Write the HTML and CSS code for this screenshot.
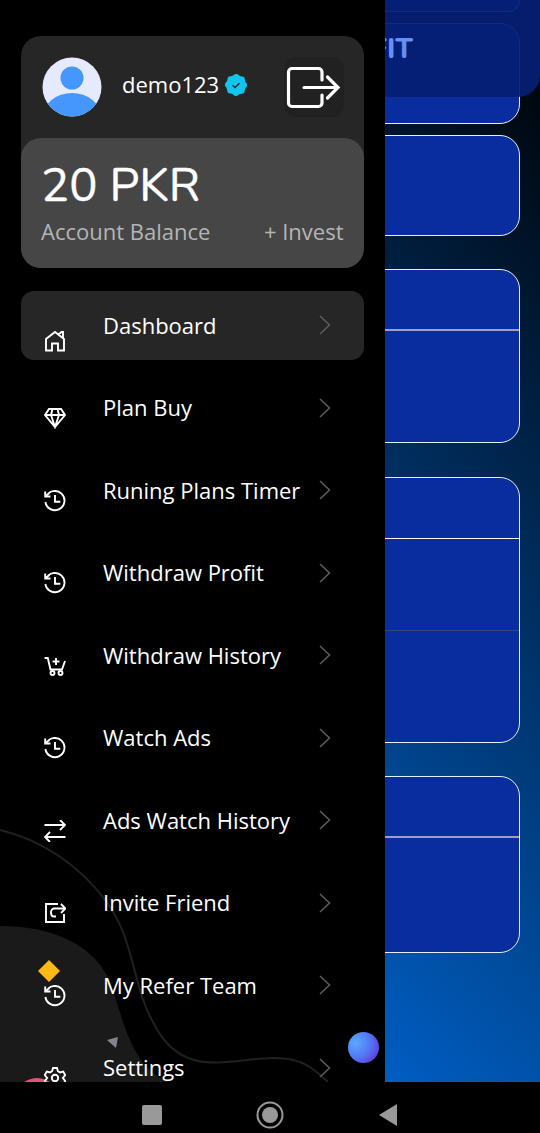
FILE: index.html
```html
<!DOCTYPE html>
<html lang="en">
<head>
  <meta charset="UTF-8">
  <title>Dashboard</title>
  <link rel="stylesheet" href="styles.css">
</head>
<body>
  <svg class="sprite">
    <symbol id="history" viewBox="0 0 22 22">
      <path d="M2.2 6.5A9.6 9.6 0 1 1 1.4 12M1.2 1.500v5h5.3M1.500 6l4-3M11 5v6.8h5.3"/>
    </symbol>
    <symbol id="chevron" viewBox="0 0 12 20">
      <path d="M1 1l9.500 9L1 19"/>
    </symbol>
  </svg>

  <div class="app">
    <main class="page">
      <header class="topbar">FIT</header>
      <div class="cards">
        <section class="card first"></section>
        <section class="card small"></section>
        <section class="card small"></section>
        <section class="card stats"><div class="card-head"></div></section>
        <section class="card tall"><div class="card-head"></div><div class="card-row"></div></section>
        <section class="card last"><div class="card-head"></div></section>
      </div>
    </main>

    <aside class="drawer">
      <svg class="waves" viewBox="0 0 385 262">
        <path fill="#1a1a1a" d="M0 106C52 106 92 124 109 159C122 192 130 250 170 262H0Z"/>
        <path fill="none" stroke="#202020" stroke-width="2" d="M0 10C42 20 79 45 106 81C135 120 132 165 153 202C181 260 228 239 272 238C302 237 314 249 328 262"/>
        <path fill="#fdb913" d="M49 140l11 11-11 11-11-11z"/>
        <path fill="#84848e" d="M107 220l11-3-2 11z"/>
        <circle cx="37" cy="280" r="22" fill="#e05577"/>
      </svg>

      <div class="profile">
        <div class="user">
          <svg class="avatar" viewBox="0 0 60 60">
            <clipPath id="round"><circle cx="30" cy="30" r="29.5"/></clipPath>
            <circle cx="30" cy="30" r="29.5" fill="#e6eaff"/>
            <g fill="#4596fd" clip-path="url(#round)">
              <circle cx="30" cy="21" r="11.5"/>
              <ellipse cx="30" cy="60" rx="29" ry="24"/>
            </g>
          </svg>
          <span class="name">demo123</span>
          <svg class="verified" viewBox="0 0 24 24">
            <circle cx="12" cy="12" r="10" fill="#12c5ee"/>
            <circle cx="12" cy="12" r="8" fill="none" stroke="#12c5ee" stroke-width="6" stroke-linecap="round" stroke-dasharray="0 6.283"/>
            <path fill="none" stroke="#262626" stroke-width="1.500" d="M8.500 12.300l2.500 2.200 4.500-4.300"/>
          </svg>
          <button class="logout">
            <svg viewBox="0 0 60 60">
              <path d="M38 23v-8a3.500 3.500 0 0 0-3.500-3.500H8A3.500 3.500 0 0 0 4.500 15v31A3.500 3.500 0 0 0 8 49.500h26.500A3.500 3.500 0 0 0 38 46v-8M20 30.500H54M43.500 20L54 30.500 43.500 41"/>
            </svg>
          </button>
        </div>
        <div class="balance">
          <div class="amount">20 PKR</div>
          <div class="balance-row"><span>Account Balance</span><span>+ Invest</span></div>
        </div>
      </div>

      <nav class="menu">
        <a class="item active">
          <svg class="icon home" viewBox="0 0 22 22"><path d="M2 20.500V9L11 2l9 7v11.500h-6v-7H8v7zM14.500 4.500l3-2.500H19v6"/></svg>
          <span>Dashboard</span><svg class="arrow"><use href="#chevron"/></svg>
        </a>
        <a class="item">
          <svg class="icon" viewBox="0 0 22 22"><path d="M5 2h12l4 6L11 20 1 8zM1 8h20M8.500 2L7 8l4 12 4-12L13.500 2"/></svg>
          <span>Plan Buy</span><svg class="arrow"><use href="#chevron"/></svg>
        </a>
        <a class="item">
          <svg class="icon"><use href="#history"/></svg>
          <span>Runing Plans Timer</span><svg class="arrow"><use href="#chevron"/></svg>
        </a>
        <a class="item">
          <svg class="icon"><use href="#history"/></svg>
          <span>Withdraw Profit</span><svg class="arrow"><use href="#chevron"/></svg>
        </a>
        <a class="item">
          <svg class="icon" viewBox="0 0 22 22"><path d="M.5 3h3.300L6.500 14.500H18L21 6M12 3v7M8.500 6.500h7"/><circle cx="8.500" cy="18" r="2"/><circle cx="16.500" cy="18" r="2"/></svg>
          <span>Withdraw History</span><svg class="arrow"><use href="#chevron"/></svg>
        </a>
        <a class="item">
          <svg class="icon"><use href="#history"/></svg>
          <span>Watch Ads</span><svg class="arrow"><use href="#chevron"/></svg>
        </a>
        <a class="item">
          <svg class="icon" viewBox="0 0 22 22"><path d="M.5 5H21M16 0l5 5-5 5M21.500 17H1M6 12l-5 5 5 5"/></svg>
          <span>Ads Watch History</span><svg class="arrow"><use href="#chevron"/></svg>
        </a>
        <a class="item">
          <svg class="icon" viewBox="0 0 22 22"><path d="M14 2H2v18h18v-8M12 14.500h-2c-4 0-4-8 0-8h11M17 2l4.500 4.500L17 11"/></svg>
          <span>Invite Friend</span><svg class="arrow"><use href="#chevron"/></svg>
        </a>
        <a class="item">
          <svg class="icon"><use href="#history"/></svg>
          <span>My Refer Team</span><svg class="arrow"><use href="#chevron"/></svg>
        </a>
        <a class="item">
          <svg class="icon" viewBox="0 0 22 22"><path d="M9 1h4l.9 3.200 2.100 1.200 3.200-.8 2 3.500L18.900 11l2.300 2.900-2 3.500-3.200-.8-2.100 1.200L13 21H9l-.9-3.200L6 16.600l-3.200.8-2-3.500L3.100 11 .8 8.100l2-3.500 3.200.8 2.100-1.200z"/><circle cx="11" cy="11" r="3.200"/></svg>
          <span>Settings</span><svg class="arrow"><use href="#chevron"/></svg>
        </a>
      </nav>
      <div class="bubble"></div>
    </aside>
  </div>

  <footer class="navbar">
    <svg viewBox="0 0 20 20"><rect width="20" height="20" rx="2"/></svg>
    <svg class="circle" viewBox="0 0 28 28"><circle cx="14" cy="14" r="12.500" fill="none" stroke="#999" stroke-width="2"/><circle cx="14" cy="14" r="8"/></svg>
    <svg class="back" viewBox="0 0 20 24"><path d="M19 1v22L1 12z"/></svg>
  </footer>
</body>
</html>
```
FILE: styles.css
```css
* {
  box-sizing: border-box;
}
body {
  margin: 0;
  height: 1133px;
  display: flex;
  flex-direction: column;
  overflow: hidden;
  background: #000;
  color: #fff;
  font-family: 'Open Sans', 'Noto Sans', sans-serif;
}
.sprite {
  position: absolute;
  width: 0;
  height: 0;
}
.app {
  position: relative;
  height: 1082px;
  overflow: hidden;
}

/* page behind the drawer */
.page {
  height: 100%;
  background: linear-gradient(45deg, #007bff, #000);
}
.topbar {
  position: absolute;
  top: 0;
  left: 0;
  width: 100%;
  height: 97px;
  padding: 32px 127px 0 0;
  border-radius: 0 0 22px 22px;
  background: rgba(6, 31, 116, 0.94);
  color: #658ff5;
  font: 800 28px/34px Nunito, Lato, sans-serif;
  text-align: right;
}
.cards {
  padding: 0 20px;
}
.card {
  border: 1px solid #e4efff;
  border-radius: 20px;
  background: #092c9f;
}
.first {
  height: 12px;
  border-top: 0;
  border-radius: 0 0 20px 20px;
}
.small {
  height: 101px;
  margin-top: 11px;
}
.stats {
  height: 174px;
  margin-top: 33px;
}
.tall {
  height: 266px;
  margin-top: 34px;
}
.last {
  height: 177px;
  margin-top: 33px;
}
.card-head {
  height: 61px;
  border-bottom: 1px solid #d8dbe8;
}
.stats .card-head,
.last .card-head {
  border-bottom: 2px solid #a09fbe;
}
.tall .card-head {
  border-color: #fff;
}
.card-row {
  height: 92px;
  border-bottom: 1px solid #3c4382;
}

/* drawer */
.drawer {
  position: absolute;
  top: 0;
  left: 0;
  width: 385px;
  height: 100%;
  padding: 36px 21px 0 20.5px;
  background: #000;
}
.waves {
  position: absolute;
  left: 0;
  bottom: 0;
  width: 385px;
  height: 262px;
}
.profile {
  border-radius: 20px;
  background: #262626;
}
.user {
  height: 102px;
  display: flex;
  align-items: center;
  padding: 0 20px 0 21px;
}
.avatar {
  width: 60px;
  height: 60px;
}
.name {
  margin: -6px 0 0 20.5px;
  font-size: 22px;
  line-height: 30px;
}
.verified {
  width: 24px;
  height: 24px;
  margin: -5px 0 0 5px;
}
.logout {
  width: 60px;
  height: 60px;
  margin-left: auto;
  padding: 0;
  border: 0;
  border-radius: 12px;
  background: #212121;
}
.logout svg {
  display: block;
  fill: none;
  stroke: #fff;
  stroke-width: 3.2;
  stroke-linecap: round;
}
.balance {
  height: 130px;
  padding: 20px 20.5px 0;
  border-radius: 20px;
  background: #464646;
}
.amount {
  font: 47px/56px Nunito, Lato, sans-serif;
  -webkit-text-stroke: 0.4px #fff;
}
.balance-row {
  display: flex;
  justify-content: space-between;
  margin-top: 2px;
  color: #b5b5b5;
  font-size: 22px;
  line-height: 30px;
}
.menu {
  position: relative;
  display: flex;
  flex-direction: column;
  gap: 14px;
  margin-top: 23px;
}
.item {
  height: 68.5px;
  flex-shrink: 0;
  display: flex;
  align-items: center;
  padding: 0 33px 0 23px;
  border-radius: 13px;
  font-size: 22px;
}
.item span {
  margin-top: -1px;
}
.active {
  background: #262626;
}
.icon {
  width: 22px;
  height: 22px;
  margin: 21px 37.5px 0 0;
  fill: none;
  stroke: #fff;
  stroke-width: 1.9;
}
.home {
  margin-top: 32px;
}
.arrow {
  width: 12px;
  height: 20px;
  margin-left: auto;
  fill: none;
  stroke: #5d5d5d;
  stroke-width: 1.5;
}
.bubble {
  position: absolute;
  left: 348px;
  top: 1032px;
  width: 31px;
  height: 31px;
  border-radius: 50%;
  background: radial-gradient(circle at 25% 35%, #5aa9fd, #5274f4 50%, #6430cf 90%);
}

/* system buttons */
.navbar {
  height: 51px;
  display: flex;
  align-items: center;
  justify-content: space-between;
  padding: 14px 142.5px 0 141.5px;
}
.navbar svg {
  width: 20px;
  height: 20px;
  fill: #999;
}
.navbar .circle {
  width: 28px;
  height: 28px;
}
.navbar .back {
  height: 24px;
}
```
